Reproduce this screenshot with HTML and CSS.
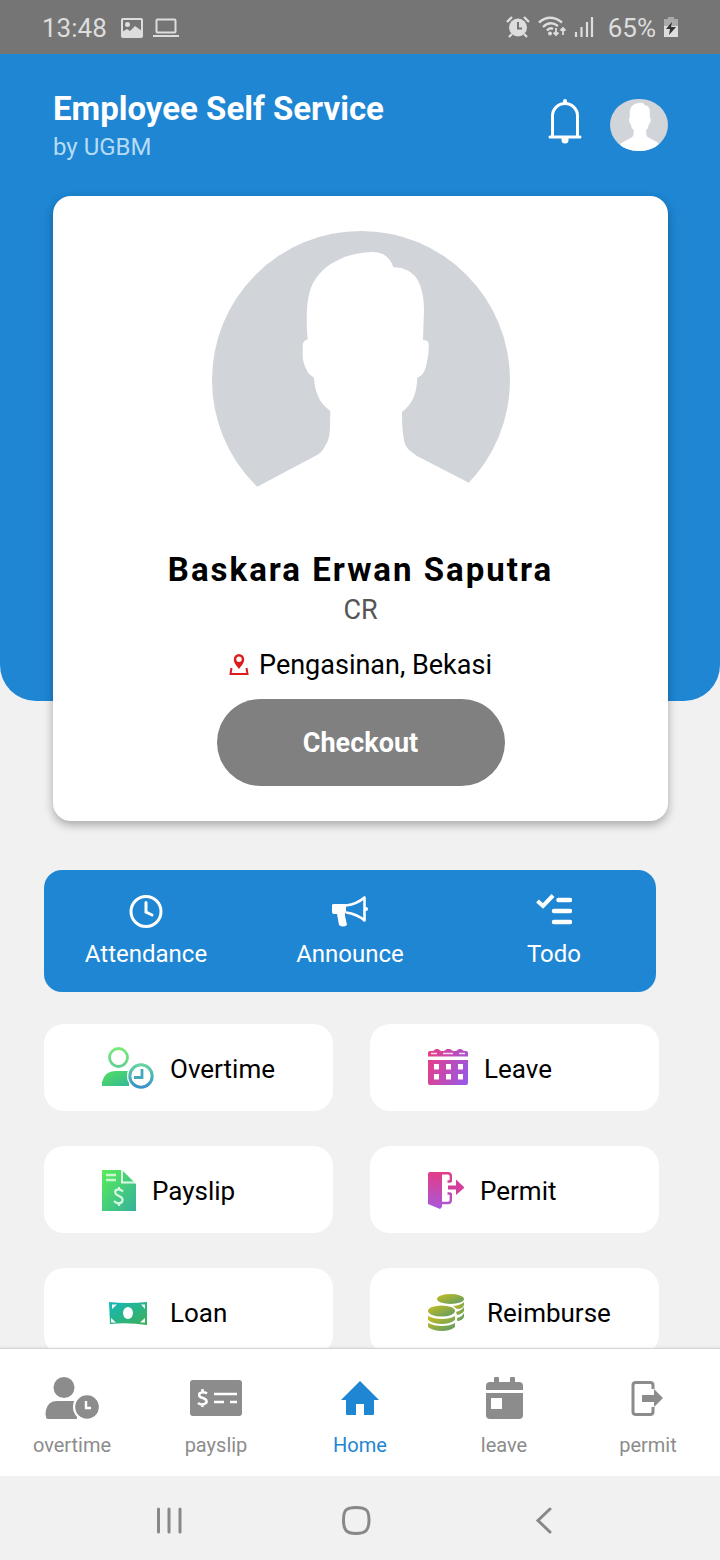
FILE: index.html
```html
<!DOCTYPE html>
<html lang="en">
<head>
<meta charset="utf-8">
<meta name="viewport" content="width=device-width, initial-scale=1">
<title>Employee Self Service</title>
<link rel="stylesheet" href="styles.css">
</head>
<body>
<svg class="defs" width="0" height="0" aria-hidden="true">
  <defs>
    <path id="person" d="M45.7 255.500L106 223.500Q111 220 113 215Q117.500 209 118 197L118.300 180Q109 173 106 165Q102.500 157 102 146.700Q96 143 94.700 139Q91 132 90.700 125.700V113Q92 109 95.700 108.500Q93 80 97.300 62.300Q100 51 108 42.300Q115 34 124.700 29.700Q137 23 151.300 21.700Q164 20 171.300 23.300Q179 28 181.300 36.300Q189 36 194.700 39Q204 43 208 54Q212 65 212 79L211 109Q216.500 109 216.700 113Q217 122 215.300 129Q214 138 210.700 143Q208 146 205.300 146.700Q205 158 201.300 167.300Q197 176 190 181Q190 200 192 209Q193 216 198 219.700Q204 225 211.300 228.300L256.300 251.500L290 320H10Z"/>
    <clipPath id="oval"><rect width="58" height="52" rx="28" ry="26"/></clipPath>
    <linearGradient id="green" x1="0" y1="0" x2="1" y2="1"><stop offset="0" stop-color="#58ec58"/><stop offset="1" stop-color="#35b19c"/></linearGradient>
    <linearGradient id="lime" x1="0" y1="0" x2="0" y2="1"><stop offset="0" stop-color="#7cea78"/><stop offset="1" stop-color="#60cf90"/></linearGradient>
    <linearGradient id="body" x1="0" y1="0" x2="1" y2="1"><stop offset="0" stop-color="#55e05c"/><stop offset="1" stop-color="#33b898"/></linearGradient>
    <linearGradient id="dial" x1="0" y1="0" x2="0" y2="1"><stop offset="0" stop-color="#66d4a0"/><stop offset="1" stop-color="#3a92c8"/></linearGradient>
    <linearGradient id="pink" gradientUnits="userSpaceOnUse" x1="0" y1="8" x2="42" y2="24"><stop offset="0" stop-color="#e93d83"/><stop offset="1" stop-color="#9958e6"/></linearGradient>
    <linearGradient id="door" gradientUnits="userSpaceOnUse" x1="10" y1="3" x2="6" y2="40"><stop offset="0" stop-color="#e43b86"/><stop offset="1" stop-color="#a759dc"/></linearGradient>
    <linearGradient id="cash" x1="0" y1="0" x2="1" y2="1"><stop offset="0" stop-color="#12b9bd"/><stop offset="1" stop-color="#3eaf55"/></linearGradient>
    <linearGradient id="coin" x1="0" y1="0" x2="1" y2="1"><stop offset="0" stop-color="#c9bd1e"/><stop offset="1" stop-color="#599b68"/></linearGradient>
  </defs>
</svg>
<div class="app">
  <div class="status">
    <div class="status-group">
      <time>13:48</time>
      <svg width="22" height="20" viewBox="0 0 22 20"><rect x="1" y="1" width="20" height="18" rx="1" fill="none" stroke="#ddd" stroke-width="2"/><circle cx="6.500" cy="6.500" r="2.500" fill="#ddd"/><path d="M1 14L6 11L9 13L14 8L21 13V19H1Z" fill="#ddd"/></svg>
      <svg width="26" height="20" viewBox="0 0 26 20" fill="none" stroke="#ddd" stroke-width="2"><rect x="3.500" y="1.500" width="19" height="13" rx="1"/><path d="M0 18H26"/></svg>
    </div>
    <div class="status-group status-right">
      <svg width="24" height="26" viewBox="0 0 24 26" fill="none" stroke="#ddd" stroke-width="2.400"><circle cx="12" cy="12.500" r="9" fill="#ddd" stroke="none"/><path d="M1 7L6 2M18 2L23 7M6 19L3 22M18 19L21 22"/><path d="M12 7V13.500H16" stroke="#757575" stroke-width="2"/></svg>
      <svg width="28" height="26" viewBox="0 0 28 26" fill="none" stroke="#ddd" stroke-width="2.400"><path d="M1 7.500Q12 -2 24 7.500M5 12Q12 5 20 11M9 15.500Q12 12 15 14"/><circle cx="12" cy="18.500" r="2" fill="#ddd" stroke="none"/><path d="M18 13V20M15.500 17.500L18 20L20.500 17.500M25 20V13M22.500 15.500L25 13L27.500 15.500" stroke-width="1.800"/></svg>
      <svg width="20" height="26" viewBox="0 0 20 26" stroke="#ddd" stroke-width="2.200"><path d="M2 17V22M7.500 12V22M13 7V22M18 2V22"/></svg>
      <span class="percent">65%</span>
      <svg width="14" height="22" viewBox="0 0 14 22"><path d="M4 0H10V2H14V10H0V2H4Z" fill="#aaa"/><path d="M0 9H14V20H0Z" fill="#ddd"/><path d="M8 5L2 12H6L5 18L12 10H7Z" fill="#333"/></svg>
    </div>
  </div>

  <main class="content">
    <header class="hero">
      <div class="hero-bar">
        <div class="brand">
          <h1>Employee Self Service</h1>
          <p>by UGBM</p>
        </div>
        <button class="plain" type="button" aria-label="Notifications">
          <svg width="34" height="52" viewBox="0 0 34 52" fill="none" stroke="#fff" stroke-width="3" stroke-linecap="round"><path d="M4.500 38V17A12.500 12.500 0 0 1 29.500 17V38M2 38H32"/><path d="M17 2V4" stroke-width="4"/><path d="M13.500 39H20.500V41A3.500 3.500 0 0 1 13.500 41Z" fill="#fff" stroke="none"/></svg>
        </button>
        <button class="plain" type="button" aria-label="Profile">
          <svg width="58" height="52" viewBox="0 0 58 52"><g clip-path="url(#oval)"><rect width="58" height="52" fill="#d1d4d9"/><use href="#person" fill="#fff" transform="translate(3.400 0) scale(.172)"/></g></svg>
        </button>
      </div>
      <section class="card">
        <svg class="avatar" width="298" height="298" viewBox="0 0 298 298" role="img" aria-label="Profile picture"><circle cx="149" cy="149" r="149" fill="#d1d4d9"/><use href="#person" fill="#fff"/><path d="M45.700 255.500L256.300 251.500L298 298H0Z" fill="#fff"/></svg>
        <h2>Baskara Erwan Saputra</h2>
        <p class="role">CR</p>
        <p class="place">
          <svg width="20" height="22" viewBox="0 0 20 22"><path d="M2.500 14L1.500 20H18.500L17.500 14" fill="none" stroke="#e01b1b" stroke-width="2"/><path fill="#e01b1b" fill-rule="evenodd" d="M10 15C7.500 11.500 4.800 9 4.800 5.200A5.200 5.200 0 0 1 15.200 5.200C15.200 9 12.500 11.500 10 15ZM10 2.600A2.700 2.700 0 0 0 10 8A2.700 2.700 0 0 0 10 2.600Z"/></svg>
          Pengasinan, Bekasi
        </p>
        <button class="checkout" type="button">Checkout</button>
      </section>
    </header>

    <nav class="quick" aria-label="Shortcuts">
      <a href="#attendance"><svg width="36" height="34" viewBox="0 0 36 34" fill="none" stroke="#fff" stroke-width="3" stroke-linecap="round"><circle cx="18" cy="17.500" r="15"/><path d="M18 8.500V18L24 21"/></svg>Attendance</a>
      <a href="#announce"><svg width="36" height="34" viewBox="0 0 36 34"><path d="M0 11Q0 10 2 10H14V19H13V22Q14 26 15 31Q11 34 7 31L5 20H2Q0 20 0 18Z" fill="#fff"/><path d="M14 11.500Q25 10 32.500 3.500V26.500Q25 20 14 18.500" fill="none" stroke="#fff" stroke-width="2.600" stroke-linejoin="round"/><circle cx="34" cy="15" r="2" fill="#fff"/></svg>Announce</a>
      <a href="#todo"><svg width="36" height="34" viewBox="0 0 36 34" fill="none" stroke="#fff"><path d="M1.500 7L7 12L17 1.500" stroke-width="4"/><path d="M22.500 6H34M18 17H34M18 28H34" stroke-width="4.500" stroke-linecap="round"/></svg>Todo</a>
    </nav>

    <nav class="tiles" aria-label="Services">
      <a href="#overtime"><svg width="52" height="44" viewBox="0 0 52 44"><circle cx="16.500" cy="10.500" r="9" fill="none" stroke="url(#lime)" stroke-width="2.800"/><path d="M0 39V35Q3 24 13 24H27V39Z" fill="url(#body)"/><circle cx="39" cy="29" r="14" fill="#fff"/><circle cx="39" cy="29" r="11.200" fill="none" stroke="url(#dial)" stroke-width="3"/><path d="M40 22V30.500H32" fill="none" stroke="#45a9bd" stroke-width="2.800"/></svg>Overtime</a>
      <a href="#leave"><svg width="40" height="44" viewBox="0 0 40 44"><path fill="url(#pink)" d="M0 6Q0 4 2 4H5L8 2H10L13 4H16L19 2H22L25 4H28L31 2H33L36 4H38Q40 4 40 6V9.500H0Z"/><path d="M3 6.500H9M15 6.500H25M31 6.500H37" stroke="#f8d8ee" stroke-width="1.600"/><path fill="url(#pink)" fill-rule="evenodd" d="M0 13H40V36Q40 38 38 38H2Q0 38 0 36ZM6 17V22.500H11V17ZM18 17V22.500H23V17ZM30 17V22.500H35V17ZM6 27V32.500H11V27ZM18 27V32.500H23V27ZM30 27V32.500H35V27Z"/></svg>Leave</a>
      <a href="#payslip"><svg width="34" height="44" viewBox="0 0 34 44"><path d="M0 1H20L34 15V42H0Z" fill="url(#green)"/><path d="M22 1H34V13Z" fill="#fff"/><path d="M20 1V13.500H34" fill="none" stroke="#dff8e8" stroke-width="2"/><path d="M4 6H14M4 11H14" stroke="#c8f7cd" stroke-width="2.500"/><path d="M21 22.500Q17 19 13.500 21.500Q12 25 17 27Q22 29 20 33Q16 36 12 32M17 18V21M17 34V37" fill="none" stroke="#d8f7e4" stroke-width="2.200"/></svg>Payslip</a>
      <a href="#permit"><svg width="36" height="44" viewBox="0 0 36 44"><path d="M0 5Q0 3 2 3H14V38L12 40L0 35Z" fill="url(#door)"/><path d="M13 4.200H20Q22.800 4.200 22.800 7V13M22.800 24V31Q22.800 34 20 34H14M22.800 12.500H19.500M22.800 24.500H19.500" fill="none" stroke="url(#door)" stroke-width="2.400"/><path d="M20 16.500H28V10.500L36.500 18.500L28 26V20.500H20Z" fill="#d2409c"/></svg>Permit</a>
      <a href="#loan"><svg width="52" height="44" viewBox="0 0 52 44"><path d="M7 11Q26 13 45 11V34Q26 31 8 33Z" fill="url(#cash)"/><ellipse cx="26" cy="22" rx="5" ry="6" fill="#fff"/><path d="M10 13.500H15L10 18ZM39 13.500H43V18ZM9 27L14 31.500H9ZM43 27V31.500H38Z" fill="#fff"/></svg>Loan</a>
      <a href="#reimburse"><svg width="43" height="44" viewBox="0 0 43 44" fill="url(#coin)"><ellipse cx="22.500" cy="8" rx="13.500" ry="5"/><path d="M25 15Q33 14 36 11V14Q35 18 29 18ZM28 21Q34 19 36 16V20Q34 23 29 24ZM29 27Q34 26 36 22V26Q34 30 29 30Z"/><ellipse cx="13.500" cy="20" rx="13.500" ry="5.500"/><path d="M0 25Q6 28 14 28Q22 28 27 25V29Q22 33 14 33Q5 33 0 29ZM0 32Q6 35 14 35Q22 35 27 32V36Q22 40 14 40Q5 40 0 36Z"/></svg>Reimburse</a>
    </nav>
  </main>

  <nav class="tabs" aria-label="Main">
    <a href="#overtime"><svg width="54" height="44" viewBox="0 0 54 44" fill="currentColor"><circle cx="19" cy="11.500" r="10.500"/><path d="M1 41Q0 38 1 34Q3 25 12 25H32V43H3Q1 43 1 41Z"/><circle cx="42" cy="31" r="14" fill="#fff"/><circle cx="42" cy="31" r="11.800"/><path d="M41 25V32H46" fill="none" stroke="#fff" stroke-width="2.400"/></svg>overtime</a>
    <a href="#payslip"><svg width="54" height="44" viewBox="0 0 54 44"><rect x="1" y="4" width="52" height="36" rx="3" fill="currentColor"/><path d="M18 17.500Q14 15 10.500 17.500Q9 21 14 22Q19 24 17 27Q13 30 9 27M13.500 13V16M13.500 28V31M25 18H48M25 26H35M41 26H48" fill="none" stroke="#fff" stroke-width="2.600"/></svg>payslip</a>
    <a class="active" href="#home" aria-current="page"><svg width="54" height="44" viewBox="0 0 54 44" fill="currentColor"><path d="M27 5L46 24H41V38Q41 39 40 39H31V28H23V39H14Q13 39 13 38V24H8Z"/></svg>Home</a>
    <a href="#leave"><svg width="54" height="44" viewBox="0 0 54 44" fill="currentColor"><path d="M9 14V10Q9 6 13 6H17V2Q17 1 18 1H21Q22 1 22 2V6H33V2Q33 1 34 1H37Q38 1 38 2V6H42Q46 6 46 10V14Z"/><path fill-rule="evenodd" d="M9 17H46V39Q46 43 42 43H13Q9 43 9 39ZM14 22V33H25V22Z"/></svg>leave</a>
    <a href="#permit"><svg width="54" height="44" viewBox="0 0 54 44"><path d="M32 13V9Q32 6.500 29 6.500H15Q12 6.500 12 9V36Q12 38.500 15 38.500H29Q32 38.500 32 36V31" fill="none" stroke="currentColor" stroke-width="3"/><path d="M21 19H33V13L42 22L33 31V26H21Z" fill="currentColor"/></svg>permit</a>
  </nav>

  <div class="system">
    <button class="plain" type="button" aria-label="Recent apps"><svg width="32" height="32" viewBox="0 0 32 32" stroke="#888" stroke-width="3" stroke-linecap="round"><path d="M5.500 5V28M16 5V28M27 5V28"/></svg></button>
    <button class="plain" type="button" aria-label="Home screen"><svg width="32" height="32" viewBox="0 0 32 32"><path d="M16 3.500C26 3.500 29 6 29 16S26 29.500 16 29.500S3.500 26 3.500 16S6 3.500 16 3.500Z" fill="none" stroke="#888" stroke-width="3"/></svg></button>
    <button class="plain" type="button" aria-label="Back"><svg width="32" height="32" viewBox="0 0 32 32" fill="none" stroke="#888" stroke-width="3" stroke-linecap="round"><path d="M22 5L10 16.500L22 28"/></svg></button>
  </div>
</div>
</body>
</html>
```
FILE: styles.css
```css
* { box-sizing: border-box; }
body {
  margin: 0;
  background: #f1f1f1;
  color: #000;
  font-family: Roboto, "Liberation Sans", sans-serif;
}
h1, h2, p { margin: 0; }
a { color: inherit; text-decoration: none; }
svg { display: block; flex: none; }
.defs { position: absolute; }
.plain {
  padding: 0;
  border: 0;
  background: none;
}
.app {
  display: flex;
  flex-direction: column;
  height: 100vh;
}

.status {
  display: flex;
  justify-content: space-between;
  align-items: center;
  height: 54px;
  flex: none;
  padding: 2px 42px 0;
  background: #757575;
  color: #ddd;
  font-size: 26px;
  line-height: 32px;
}
.status-group {
  display: flex;
  align-items: center;
  gap: 10px;
}
.status time { margin-right: 4px; }
.status-right { gap: 8px; }
.percent { margin-left: 6px; }

.content {
  flex: 1;
  min-height: 0;
  overflow-y: auto;
  scrollbar-width: none;
}
.hero {
  display: flow-root;
  padding: 34px 52px 0 53px;
  border-radius: 0 0 36px 36px;
  background: #1e86d3;
}
.hero-bar {
  display: flex;
  align-items: center;
  gap: 28px;
}
.brand {
  flex: 1;
  color: #fff;
}
h1 {
  font-size: 33px;
  line-height: 42px;
}
.brand p {
  margin-top: 2px;
  color: #b5dbf5;
  font-size: 24px;
  line-height: 30px;
}
.card {
  display: flex;
  flex-direction: column;
  align-items: center;
  margin: 34px 0 -120px;
  padding: 35px 24px;
  border-radius: 18px;
  background: #fff;
  box-shadow: 0 4px 10px rgba(0, 0, 0, .3);
}
h2 {
  margin-top: 20px;
  font-size: 33px;
  line-height: 42px;
  letter-spacing: 2px;
}
.role {
  color: #555;
  font-size: 27px;
  line-height: 38px;
}
.place {
  display: flex;
  align-items: center;
  gap: 10px;
  margin: 17px 0 15px;
  font-size: 27px;
  line-height: 38px;
}
.checkout {
  width: 288px;
  height: 87px;
  border: 0;
  border-radius: 44px;
  background: #808080;
  color: #fff;
  font: bold 27px/32px Roboto, "Liberation Sans", sans-serif;
}

.quick {
  display: grid;
  grid-template-columns: repeat(3, 1fr);
  margin: 169px 64px 32px 44px;
  padding: 24px 0 22px;
  border-radius: 18px;
  background: #1e86d3;
  color: #fff;
  font-size: 24px;
  line-height: 32px;
}
.quick a {
  display: flex;
  flex-direction: column;
  align-items: center;
  gap: 10px;
}
.tiles {
  display: grid;
  grid-template-columns: repeat(2, 1fr);
  gap: 35px 37px;
  padding: 0 61px 35px 44px;
  font-size: 26px;
  line-height: 32px;
}
.tiles a {
  display: flex;
  align-items: center;
  gap: 16px;
  min-height: 87px;
  padding: 2px 16px 0 58px;
  border-radius: 20px;
  background: #fff;
}

.tabs {
  display: grid;
  grid-template-columns: repeat(5, 1fr);
  flex: none;
  padding: 27px 0 18px;
  border-top: 1px solid #d4d4d4;
  background: #fff;
  box-shadow: 0 -1px 3px rgba(0, 0, 0, .06);
  color: #8c8c8c;
  font-size: 20px;
  line-height: 26px;
}
.tabs a {
  display: flex;
  flex-direction: column;
  align-items: center;
  gap: 12px;
}
.tabs .active { color: #1e86d3; }

.system {
  display: flex;
  justify-content: space-around;
  align-items: center;
  flex: none;
  height: 84px;
  padding: 4px 82px 0 75px;
  background: #f1f1f1;
}
```
